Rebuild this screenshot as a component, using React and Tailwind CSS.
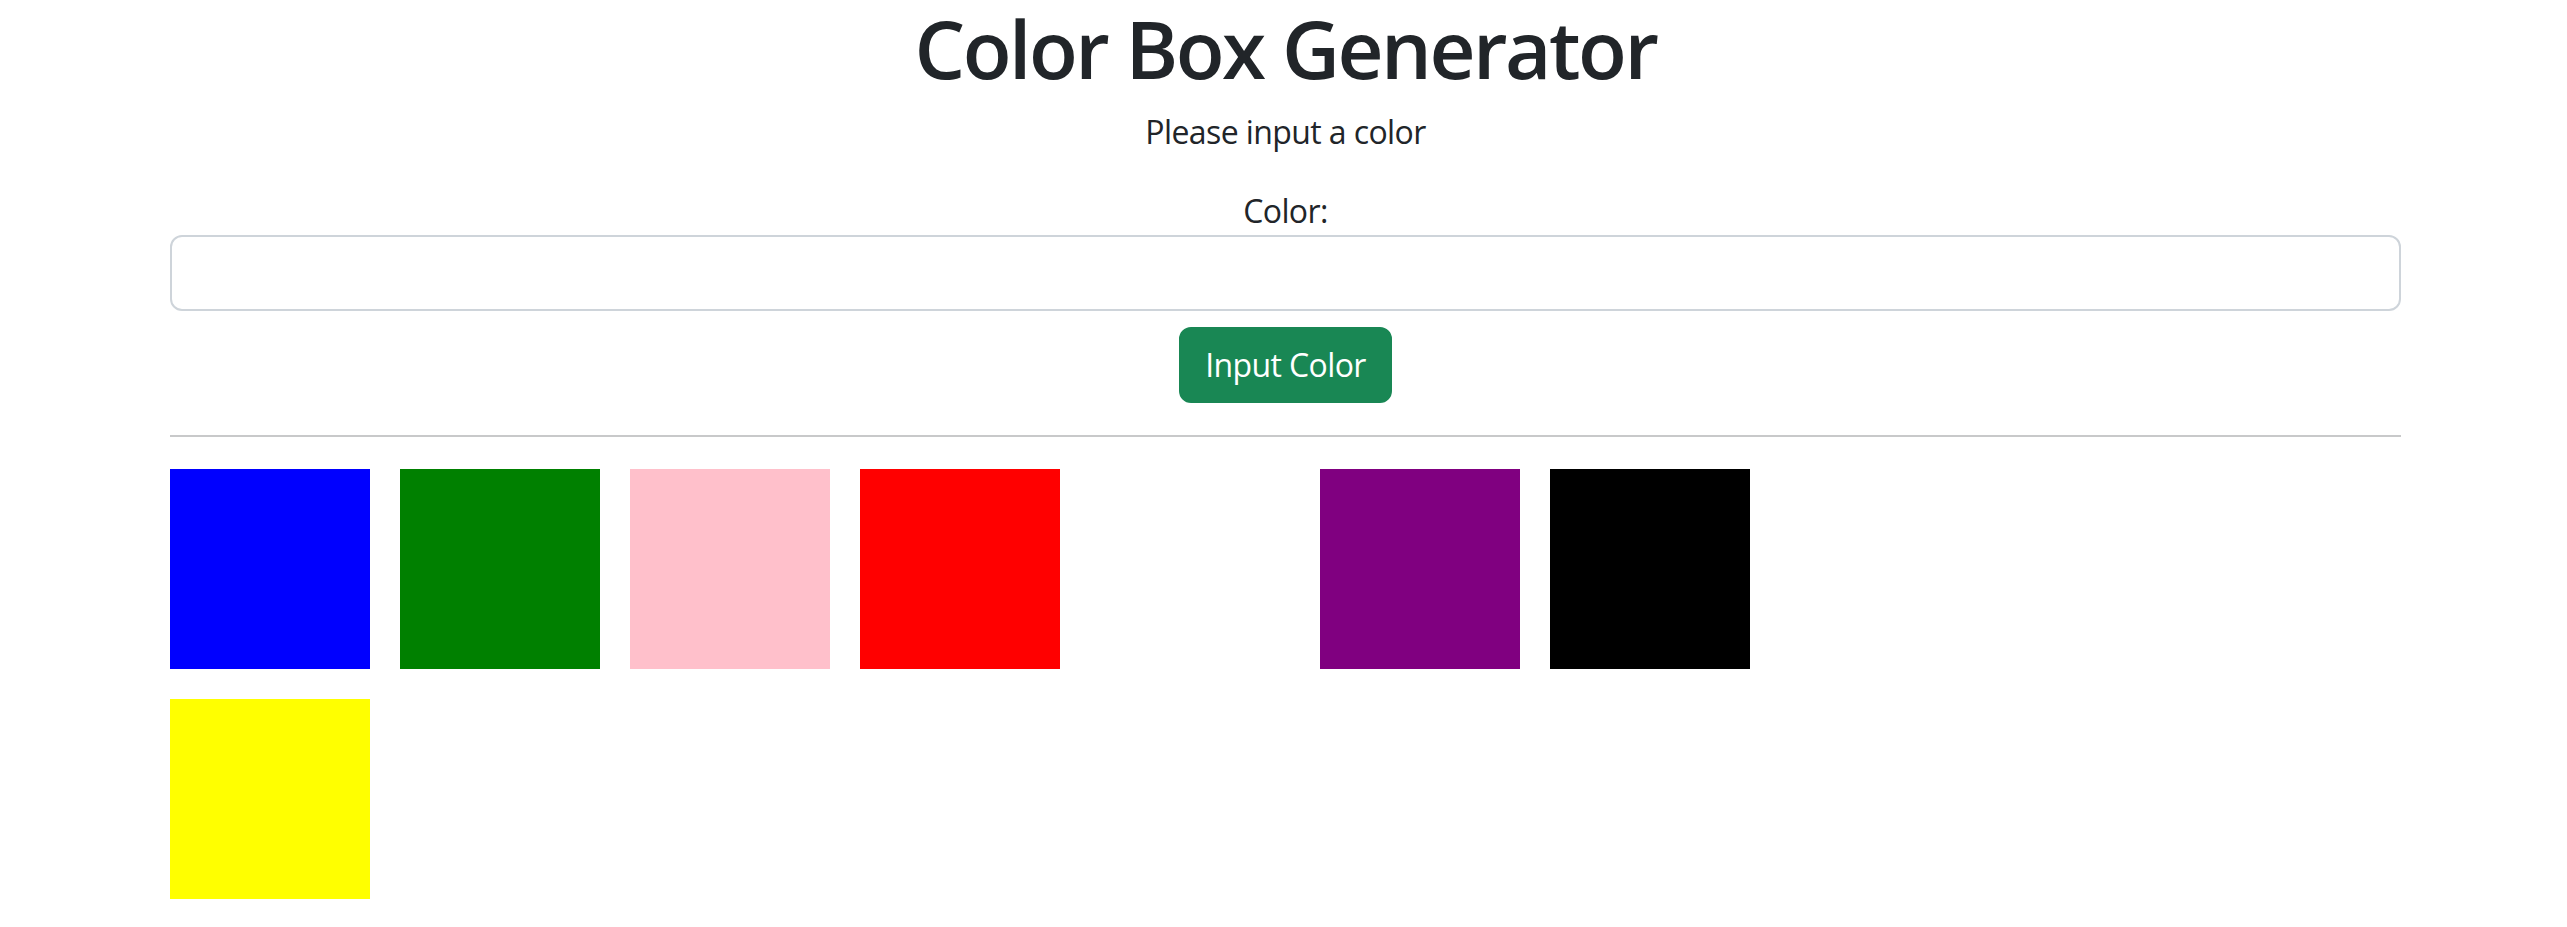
import { useState } from "react";

const startColors = ["blue", "green", "pink", "red", "white", "purple", "black", "yellow"];

const swatch = {
  blue: "bg-[#0000ff]",
  green: "bg-[#008000]",
  pink: "bg-[#ffc0cb]",
  red: "bg-[#ff0000]",
  white: "bg-[#ffffff]",
  purple: "bg-[#800080]",
  black: "bg-[#000000]",
  yellow: "bg-[#ffff00]",
};

function ColorBox({ color }) {
  return <div className={`h-[200px] w-[200px] ${swatch[color] || "bg-white"}`} />;
}

export default function App() {
  const [colors, setColors] = useState(startColors);
  const [value, setValue] = useState("");

  const addColor = () => {
    if (!value.trim()) return;
    setColors([...colors, value.trim().toLowerCase()]);
    setValue("");
  };

  return (
    <div
      className="min-h-screen bg-white text-[#212529]"
      style={{ fontFamily: '"Open Sans", "Noto Sans", sans-serif' }}
    >
      <div className="ml-[170px] w-[2231px] text-center">
        <h1 className="mb-[12px] text-[80px] font-semibold leading-[96px] tracking-[-2.5px]">
          Color Box Generator
        </h1>
        <p className="mb-[31px] text-[32px] leading-[48px] tracking-[-0.6px]">Please input a color</p>

        <label htmlFor="color" className="block text-[32px] leading-[48px] tracking-[-0.6px]">
          Color:
        </label>
        <input
          id="color"
          type="text"
          value={value}
          onChange={(e) => setValue(e.target.value)}
          className="block h-[76px] w-full rounded-[12px] border-2 border-[#ced4da] px-[24px] text-[32px] outline-none"
        />

        <div className="mt-[16px]">
          <button
            onClick={addColor}
            className="rounded-[12px] border-2 border-[#198754] bg-[#198754] px-[24px] py-[12px] text-[32px] leading-[48px] tracking-[-0.6px] text-white"
          >
            Input Color
          </button>
        </div>

        <hr className="mt-[32px] border-0 border-t-2 border-[#c8c9ca]" />

        <div className="mt-[32px] flex w-[1700px] flex-wrap gap-[30px]">
          {colors.map((c, i) => (
            <ColorBox key={i} color={c} />
          ))}
        </div>
      </div>
    </div>
  );
}
